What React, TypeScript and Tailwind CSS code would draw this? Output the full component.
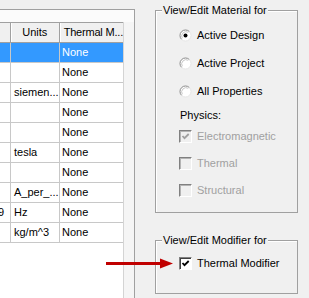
import React from "react";

type Row = { id: string; units: string; thermal: string; selected?: boolean };

const rows: Row[] = [
  { id: "", units: "", thermal: "None", selected: true },
  { id: "", units: "", thermal: "None" },
  { id: "", units: "siemen...", thermal: "None" },
  { id: "", units: "", thermal: "None" },
  { id: "", units: "", thermal: "None" },
  { id: "", units: "tesla", thermal: "None" },
  { id: "", units: "", thermal: "None" },
  { id: "", units: "A_per_...", thermal: "None" },
  { id: "0.9", units: "Hz", thermal: "None" },
  { id: "", units: "kg/m^3", thermal: "None" },
];

const Radio: React.FC<{ checked?: boolean }> = ({ checked }) => (
  <svg width="13" height="13" viewBox="0 0 13 13" className="shrink-0">
    <circle cx="6.5" cy="6.5" r="5.5" fill="#fff" />
    <path d="M2.6 10.4A5.5 5.5 0 0 1 10.4 2.6" stroke="#8a8a8a" fill="none" />
    <path d="M10.4 2.6A5.5 5.5 0 0 1 2.6 10.4" stroke="#e6e6e6" fill="none" />
    <path d="M3.3 9.2A4.3 4.3 0 0 1 9.2 3.3" stroke="#c8c8c8" fill="none" />
    {checked && <circle cx="6.5" cy="6.5" r="2" fill="#000" />}
  </svg>
);

const Checkbox: React.FC<{ checked?: boolean; disabled?: boolean }> = ({ checked, disabled }) => (
  <span
    className={`w-[13px] h-[13px] shrink-0 flex border border-t-[#808080] border-l-[#808080] border-r-white border-b-white ${
      disabled ? "bg-[#f0f0f0] shadow-[inset_1px_1px_0_#b4b4b4]" : "bg-white shadow-[inset_1px_1px_0_#404040]"
    }`}>
    {checked && (
      <svg width="11" height="11" viewBox="0 0 11 11">
        <path
          d="M2.5 5L4.5 7.2L8.7 3"
          stroke={disabled ? "#a0a0a0" : "#000"}
          strokeWidth={1.8}
          fill="none"
        />
      </svg>
    )}
  </span>
);

const App: React.FC = () => {
  return (
    <div className="w-[309px] h-[298px] bg-[#f0f0f0] relative overflow-hidden flex font-['Liberation_Sans',Arial,sans-serif] text-[11px] leading-[13px] text-black">
      {/* Grid panel */}
      <div className="w-[135px] mt-[9px] border-t border-r border-[#a0a0a0] bg-white flex flex-col">
        <div className="h-[12px] bg-[#fbfbfb]" />
        <div className="flex flex-1">
          <div className="w-[123px] flex flex-col bg-white">
            {/* Header */}
            <div className="flex h-[21px] border-t border-b border-[#a0a0a0] bg-[#f0f0f0]">
              <div className="w-[11px] border-r border-[#a0a0a0]" />
              <div className="w-[49px] border-r border-[#a0a0a0] shadow-[inset_1px_0_0_#fff] flex items-center justify-center">
                Units
              </div>
              <div className="flex-1 shadow-[inset_1px_0_0_#fff] flex items-center pl-[4px] whitespace-nowrap tracking-[-0.2px]">
                Thermal M...
              </div>
            </div>
            {/* Rows */}
            {rows.map((r, i) => (
              <div
                key={i}
                className={`flex h-[20px] border-b border-[#c8c8c8] ${r.selected ? "bg-[#3399ff] text-white" : ""}`}>
                <div className="w-[11px] border-r border-[#c8c8c8] flex items-center justify-end pr-[6px] overflow-hidden whitespace-nowrap">
                  {r.id}
                </div>
                <div className="w-[49px] border-r border-[#c8c8c8] flex items-center pl-[3px] whitespace-nowrap overflow-hidden">
                  {r.units}
                </div>
                <div className="flex-1 flex items-center pl-[2px]">{r.thermal}</div>
              </div>
            ))}
          </div>
          <div className="flex-1 bg-[#f5f5f5] border-l border-[#d4d4d4]" />
        </div>
      </div>

      {/* Right column */}
      <div className="ml-[20px] w-[143px] flex flex-col">
        {/* Material group */}
        <div className="relative mt-[10px] h-[203px] border border-[#a0a0a0] shadow-[inset_1px_1px_0_#fff] pt-[18px] pl-[23px] flex flex-col">
          <span className="absolute left-[6px] top-[-8px] px-[1px] bg-[#f0f0f0] leading-[14px] whitespace-nowrap">
            View/Edit Material for
          </span>
          <div className="flex items-center h-[13px]">
            <Radio checked />
            <span className="ml-[5px]">Active Design</span>
          </div>
          <div className="flex items-center h-[13px] mt-[15px]">
            <Radio />
            <span className="ml-[5px]">Active Project</span>
          </div>
          <div className="flex items-center h-[13px] mt-[15px]">
            <Radio />
            <span className="ml-[5px]">All Properties</span>
          </div>
          <div className="flex items-center h-[13px] mt-[11px] pl-[1px]">Physics:</div>
          <div className="flex items-center h-[13px] mt-[8px] text-[#a0a0a0]">
            <Checkbox checked disabled />
            <span className="ml-[5px]">Electromagnetic</span>
          </div>
          <div className="flex items-center h-[13px] mt-[14px] text-[#a0a0a0]">
            <Checkbox disabled />
            <span className="ml-[5px]">Thermal</span>
          </div>
          <div className="flex items-center h-[13px] mt-[14px] text-[#a0a0a0]">
            <Checkbox disabled />
            <span className="ml-[5px]">Structural</span>
          </div>
        </div>

        {/* Modifier group */}
        <div className="relative mt-[27px] h-[54px] border border-[#a0a0a0] shadow-[inset_1px_1px_0_#fff] pt-[16px] pl-[23px] flex flex-col">
          <span className="absolute left-[6px] top-[-8px] px-[1px] bg-[#f0f0f0] leading-[14px] whitespace-nowrap">
            View/Edit Modifier for
          </span>
          <div className="flex items-center h-[13px]">
            <Checkbox checked />
            <span className="ml-[5px]">Thermal Modifier</span>
          </div>
        </div>
      </div>

      {/* Callout arrow */}
      <svg className="absolute left-[106px] top-[257px]" width="70" height="13" viewBox="0 0 70 13">
        <rect x="0" y="5" width="56" height="3" fill="#c00000" />
        <polygon points="54,1.5 67,6.5 54,11.5" fill="#c00000" />
      </svg>
    </div>
  );
};

export default App;
